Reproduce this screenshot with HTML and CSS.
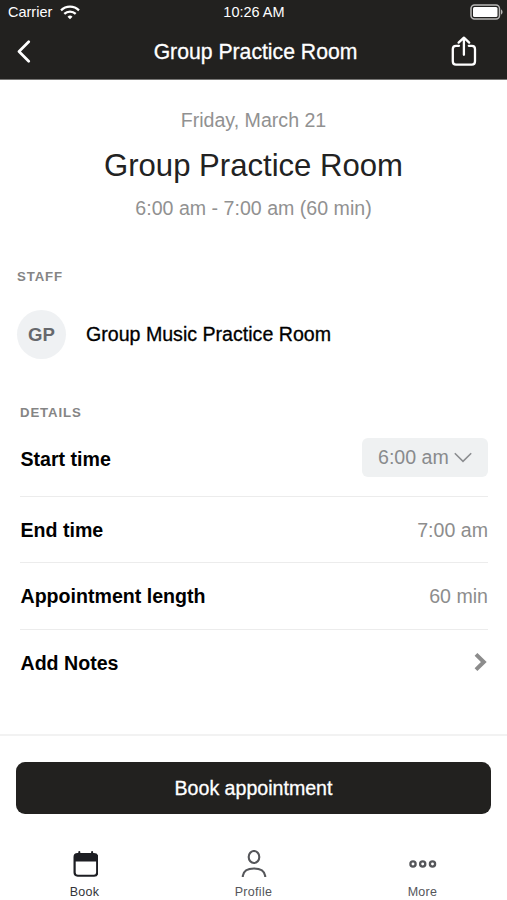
FILE: index.html
```html
<!DOCTYPE html>
<html lang="en">
<head>
  <meta charset="UTF-8" />
  <meta name="viewport" content="width=device-width, initial-scale=1.0" />
  <title>Group Practice Room</title>
  <link rel="stylesheet" href="styles.css">
</head>
<body>
  <header class="top">
    <div class="status">
      <div class="carrier">
        <span>Carrier</span>
        <svg width="20" height="15" viewBox="0 0 20 15" fill="none" stroke="#fff" stroke-width="2.2">
          <path d="M1 5.4a12.7 12.7 0 0 1 18 0" />
          <path d="M4.3 8.9a8.1 8.1 0 0 1 11.4 0" />
          <path d="M10 14.3l-2.5-2.6a3.6 3.6 0 0 1 5 0z" fill="#fff" stroke="none" />
        </svg>
      </div>
      <span class="clock">10:26 AM</span>
      <svg class="battery" width="33" height="16" viewBox="0 0 33 16">
        <rect x="1" y="1" width="28.5" height="14" rx="3.5" fill="none" stroke="#b9b8b7" stroke-width="1.5" />
        <rect x="3" y="3" width="24.5" height="10" rx="1.5" fill="#fff" />
        <path d="M31 5.2q1.6 1 1.6 2.8t-1.6 2.8z" fill="#b9b8b7" />
      </svg>
    </div>
    <nav class="navbar">
      <svg width="14" height="23" viewBox="0 0 14 23" fill="none" stroke="#fff" stroke-width="2.7" stroke-linecap="round" stroke-linejoin="round">
        <path d="M11.7 1.7L2 11.5l9.7 9.8" />
      </svg>
      <h1>Group Practice Room</h1>
      <svg width="26" height="31" viewBox="0 0 26 31" fill="none" stroke="#fff" stroke-width="2.3" stroke-linecap="round" stroke-linejoin="round">
        <path d="M8 9.8H5Q1.8 9.8 1.8 13v12.2q0 3.4 3.2 3.4h15.8q3.2 0 3.2-3.4V13q0-3.2-3.2-3.2h-3" />
        <path d="M12.9 18.8V2M7.6 6.6l5.3-5 5.3 5" />
      </svg>
    </nav>
  </header>

  <main>
    <section class="summary">
      <p>Friday, March 21</p>
      <h2>Group Practice Room</h2>
      <p>6:00 am - 7:00 am (60 min)</p>
    </section>

    <section class="staff">
      <h3>STAFF</h3>
      <div class="person">
        <span class="avatar">GP</span>
        <span class="name">Group Music Practice Room</span>
      </div>
    </section>

    <section class="details">
      <h3>DETAILS</h3>
      <div class="row start">
        <b>Start time</b>
        <button class="select">
          <span>6:00 am</span>
          <svg width="18" height="11" viewBox="0 0 18 11" fill="none" stroke="#8b8d90" stroke-width="1.6">
            <path d="M.8 1.2L9 9.3l8.2-8.1" />
          </svg>
        </button>
      </div>
      <div class="row">
        <b>End time</b>
        <span>7:00 am</span>
      </div>
      <div class="row">
        <b>Appointment length</b>
        <span>60 min</span>
      </div>
      <div class="row">
        <b>Add Notes</b>
        <svg width="14" height="20" viewBox="0 0 14 20" fill="none" stroke="#8c8c8c" stroke-width="4">
          <path d="M2 1.4L9.8 9 2 16.6" />
        </svg>
      </div>
    </section>
  </main>

  <footer>
    <button class="book">Book appointment</button>
    <div class="tabs">
      <a class="tab active">
        <svg width="26" height="28" viewBox="0 0 26 28">
          <path d="M5.500 3h.8V1.900q0-1 1-1t1 1V3h10.800V1.900q0-1 1-1t1 1V3h.8q4.400 0 4.400 4v15.600q0 4.100-4.100 4.100H5.600q-4.100 0-4.100-4.100V7q0-4 4-4zM3.700 11.500v11q0 2.200 2.200 2.200h16q2.200 0 2.200-2.200v-11z" fill="#1d1e23" fill-rule="evenodd" />
        </svg>
        <span>Book</span>
      </a>
      <a class="tab">
        <svg width="26" height="28" viewBox="0 0 26 28" fill="none" stroke="#55565a" stroke-width="2.100">
          <ellipse cx="13" cy="7" rx="5.300" ry="6" />
          <path d="M1.800 27v-1.200Q3 18.500 13 18.500t11.200 7.300V27" />
        </svg>
        <span>Profile</span>
      </a>
      <a class="tab">
        <svg width="28" height="28" viewBox="0 0 28 28" fill="none" stroke="#55565a" stroke-width="2.300">
          <circle cx="4" cy="14" r="2.600" />
          <circle cx="13.700" cy="14" r="2.600" />
          <circle cx="23.500" cy="14" r="2.600" />
        </svg>
        <span>More</span>
      </a>
    </div>
  </footer>
</body>
</html>
```
FILE: styles.css
```css
* {
  box-sizing: border-box;
}

body {
  margin: 0;
  height: 900px;
  display: flex;
  flex-direction: column;
  overflow: hidden;
  background: #fff;
  color: #000;
  font-family: "Liberation Sans", Arial, sans-serif;
  font-size: 19.6px;
}

h1, h2, h3, p {
  margin: 0;
  font-weight: 400;
}

svg {
  display: block;
  flex-shrink: 0;
}

button {
  border: 0;
  font-family: inherit;
  font-size: inherit;
}

.top {
  height: 80px;
  background: #22211f;
  border-bottom: 1px solid #777674;
  color: #fff;
}

.status {
  height: 24px;
  padding: 0 4px 0 8px;
  display: grid;
  grid-template-columns: 1fr auto 1fr;
  align-items: center;
  font-size: 14.5px;
}

.carrier {
  display: flex;
  align-items: center;
  gap: 8px;
}

.clock {
  padding-right: 3px;
}

.battery {
  justify-self: end;
}

.navbar {
  height: 55px;
  padding: 0 30px 0 17px;
  display: grid;
  grid-template-columns: 26px 1fr 26px;
  align-items: center;
}

.navbar h1 {
  padding-left: 17px;
  font-size: 21.2px;
  text-align: center;
  -webkit-text-stroke: 0.3px #fff;
}

main {
  flex: 1;
}

.summary {
  padding-top: 28px;
  text-align: center;
  color: #919191;
}

.summary p {
  line-height: 24px;
}

.summary h2 {
  margin: 15px 0 11px;
  line-height: 38px;
  font-size: 31.1px;
  color: #222;
}

h3 {
  font-size: 13.2px;
  line-height: 16px;
  font-weight: 700;
  letter-spacing: 0.9px;
  color: #858585;
}

.staff {
  padding: 49px 17px 0;
}

.person {
  margin-top: 25px;
  display: flex;
  align-items: center;
  gap: 20px;
}

.avatar {
  width: 49px;
  height: 49px;
  border-radius: 50%;
  background: #eff1f3;
  color: #66686d;
  font-size: 18.6px;
  font-weight: 700;
  line-height: 49px;
  text-align: center;
}

.name {
  -webkit-text-stroke: 0.3px #000;
}

.details {
  padding: 46px 19px 0 20px;
}

.row {
  height: 66.4px;
  padding-top: 1px;
  display: flex;
  justify-content: space-between;
  align-items: center;
  border-bottom: 1px solid #ececec;
  color: #8d8d8d;
}

.row:last-child {
  border-bottom: 0;
}

.row b {
  padding-left: 0.5px;
  color: #000;
}

.row.start {
  height: 76px;
}

.select {
  width: 126px;
  height: 39px;
  margin-bottom: 3px;
  padding: 0 16px;
  display: flex;
  justify-content: space-between;
  align-items: center;
  border-radius: 6px;
  background: #eff1f2;
  color: #898b8d;
}

footer {
  height: 166px;
  padding-top: 26px;
  border-top: 2px solid #f2f2f2;
}

.book {
  display: block;
  width: 475px;
  height: 52px;
  margin-left: 16px;
  border-radius: 9px;
  background: #22211f;
  color: #fff;
  -webkit-text-stroke: 0.3px #fff;
}

.tabs {
  padding-top: 36px;
  display: grid;
  grid-template-columns: repeat(3, 1fr);
}

.tab {
  display: flex;
  flex-direction: column;
  align-items: center;
  gap: 7px;
  color: #55565a;
  font-size: 12.5px;
  line-height: 15px;
  letter-spacing: 0.3px;
}

.tab.active {
  color: #333438;
}
```
